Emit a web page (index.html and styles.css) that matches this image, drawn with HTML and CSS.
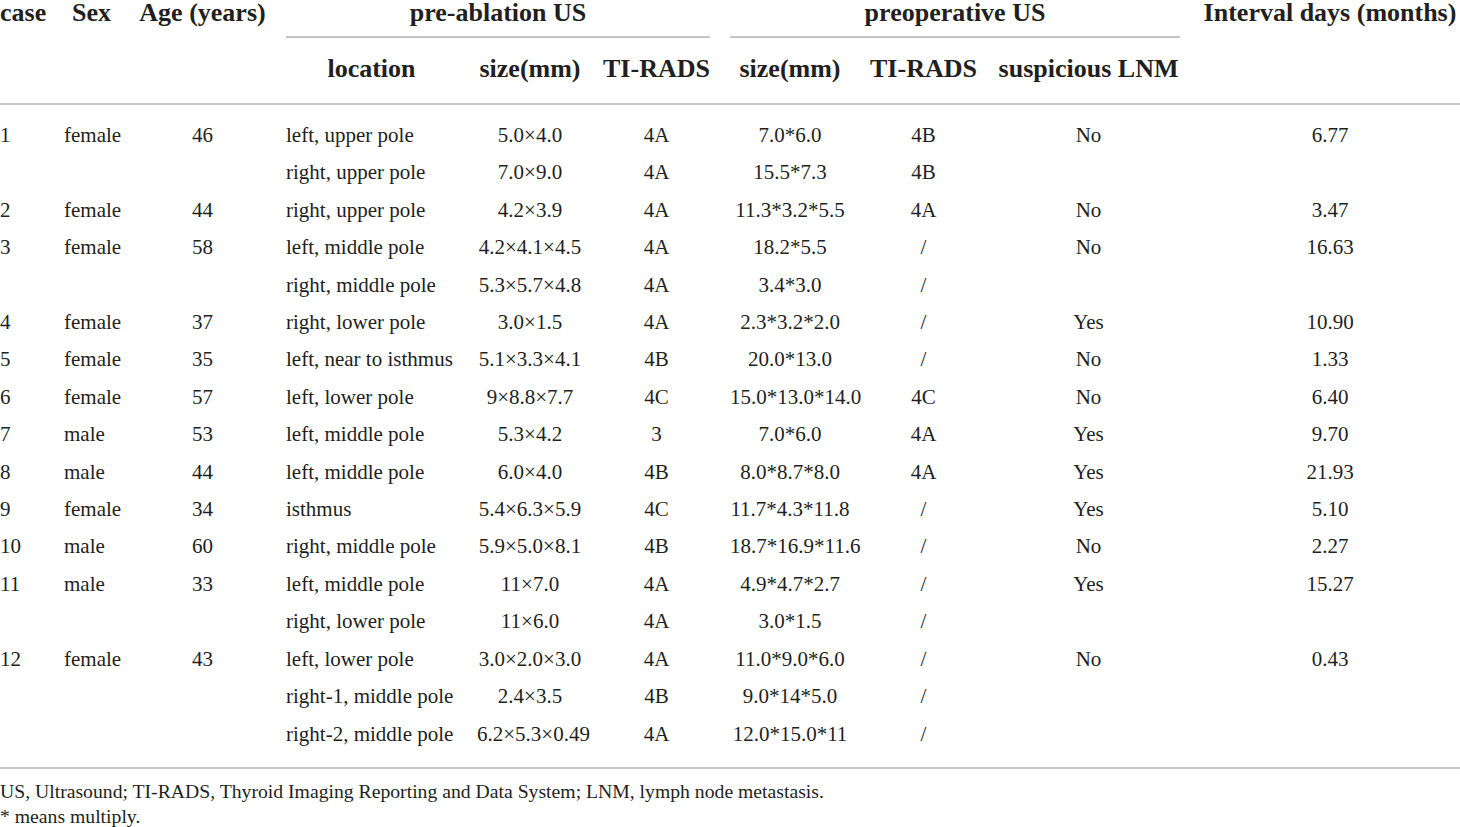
FILE: index.html
```html
<!DOCTYPE html>
<html lang="en">
<head>
    <meta charset="UTF-8">
    <title>Table - ultrasound characteristics</title>
    <link rel="stylesheet" href="styles.css">
</head>
<body>

    <table class="data-table">
        <colgroup>
            <col class="col-case">
            <col class="col-sex">
            <col class="col-age">
            <col class="col-loc">
            <col class="col-size1">
            <col class="col-rads1">
            <col class="col-size2">
            <col class="col-rads2">
            <col class="col-lnm">
            <col class="col-interval">
        </colgroup>
        <thead>
            <tr class="head-top">
                <th rowspan="2" class="first">case</th>
                <th rowspan="2">Sex</th>
                <th rowspan="2">Age (years)</th>
                <th colspan="3"><div class="group-label">pre-ablation US</div></th>
                <th colspan="3"><div class="group-label">preoperative US</div></th>
                <th rowspan="2" class="last">Interval days (months)</th>
            </tr>
            <tr class="head-sub">
                <th>location</th>
                <th>size(mm)</th>
                <th>TI-RADS</th>
                <th>size(mm)</th>
                <th>TI-RADS</th>
                <th>suspicious LNM</th>
            </tr>
        </thead>
        <tbody>
            <tr><td>1</td><td class="left">female</td><td>46</td><td class="left">left, upper pole</td><td>5.0×4.0</td><td>4A</td><td>7.0*6.0</td><td>4B</td><td>No</td><td>6.77</td></tr>
            <tr><td></td><td></td><td></td><td class="left">right, upper pole</td><td>7.0×9.0</td><td>4A</td><td>15.5*7.3</td><td>4B</td><td></td><td></td></tr>
            <tr><td>2</td><td class="left">female</td><td>44</td><td class="left">right, upper pole</td><td>4.2×3.9</td><td>4A</td><td>11.3*3.2*5.5</td><td>4A</td><td>No</td><td>3.47</td></tr>
            <tr><td>3</td><td class="left">female</td><td>58</td><td class="left">left, middle pole</td><td>4.2×4.1×4.5</td><td>4A</td><td>18.2*5.5</td><td>/</td><td>No</td><td>16.63</td></tr>
            <tr><td></td><td></td><td></td><td class="left">right, middle pole</td><td>5.3×5.7×4.8</td><td>4A</td><td>3.4*3.0</td><td>/</td><td></td><td></td></tr>
            <tr><td>4</td><td class="left">female</td><td>37</td><td class="left">right, lower pole</td><td>3.0×1.5</td><td>4A</td><td>2.3*3.2*2.0</td><td>/</td><td>Yes</td><td>10.90</td></tr>
            <tr><td>5</td><td class="left">female</td><td>35</td><td class="left">left, near to isthmus</td><td>5.1×3.3×4.1</td><td>4B</td><td>20.0*13.0</td><td>/</td><td>No</td><td>1.33</td></tr>
            <tr><td>6</td><td class="left">female</td><td>57</td><td class="left">left, lower pole</td><td>9×8.8×7.7</td><td>4C</td><td>15.0*13.0*14.0</td><td>4C</td><td>No</td><td>6.40</td></tr>
            <tr><td>7</td><td class="left">male</td><td>53</td><td class="left">left, middle pole</td><td>5.3×4.2</td><td>3</td><td>7.0*6.0</td><td>4A</td><td>Yes</td><td>9.70</td></tr>
            <tr><td>8</td><td class="left">male</td><td>44</td><td class="left">left, middle pole</td><td>6.0×4.0</td><td>4B</td><td>8.0*8.7*8.0</td><td>4A</td><td>Yes</td><td>21.93</td></tr>
            <tr><td>9</td><td class="left">female</td><td>34</td><td class="left">isthmus</td><td>5.4×6.3×5.9</td><td>4C</td><td>11.7*4.3*11.8</td><td>/</td><td>Yes</td><td>5.10</td></tr>
            <tr><td>10</td><td class="left">male</td><td>60</td><td class="left">right, middle pole</td><td>5.9×5.0×8.1</td><td>4B</td><td>18.7*16.9*11.6</td><td>/</td><td>No</td><td>2.27</td></tr>
            <tr><td>11</td><td class="left">male</td><td>33</td><td class="left">left, middle pole</td><td>11×7.0</td><td>4A</td><td>4.9*4.7*2.7</td><td>/</td><td>Yes</td><td>15.27</td></tr>
            <tr><td></td><td></td><td></td><td class="left">right, lower pole</td><td>11×6.0</td><td>4A</td><td>3.0*1.5</td><td>/</td><td></td><td></td></tr>
            <tr><td>12</td><td class="left">female</td><td>43</td><td class="left">left, lower pole</td><td>3.0×2.0×3.0</td><td>4A</td><td>11.0*9.0*6.0</td><td>/</td><td>No</td><td>0.43</td></tr>
            <tr><td></td><td></td><td></td><td class="left">right-1, middle pole</td><td>2.4×3.5</td><td>4B</td><td>9.0*14*5.0</td><td>/</td><td></td><td></td></tr>
            <tr><td></td><td></td><td></td><td class="left">right-2, middle pole</td><td>6.2×5.3×0.49</td><td>4A</td><td>12.0*15.0*11</td><td>/</td><td></td><td></td></tr>
        </tbody>
    </table>

    <div class="table-notes">
        <p>US, Ultrasound; TI-RADS, Thyroid Imaging Reporting and Data System; LNM, lymph node metastasis.</p>
        <p>* means multiply.</p>
    </div>

</body>
</html>
```

FILE: styles.css
```css
/* ページ全体 */
body {
    margin: 0;
    background-color: #ffffff;
    color: #231f20;
    font-family: "Liberation Serif", "Times New Roman", serif;
}

/* 表本体 */
.data-table {
    width: 1460px;
    table-layout: fixed;
    border-collapse: separate;
    border-spacing: 0;
    border-bottom: 2px solid #c4c4c4;
}

.col-case { width: 54px; }
.col-sex { width: 75px; }
.col-age { width: 147px; }
.col-loc { width: 191px; }
.col-size1 { width: 126px; }
.col-rads1 { width: 127px; }
.col-size2 { width: 140px; }
.col-rads2 { width: 127px; }
.col-lnm { width: 203px; }
.col-interval { width: 270px; }

.data-table th,
.data-table td {
    padding: 0 10px;
    text-align: center;
    white-space: nowrap;
}

/* 左端・右端の列は外側の余白なし */
.data-table th.first,
.data-table tbody td:first-child {
    padding-left: 0;
    text-align: left;
}

.data-table th.last,
.data-table tbody td:last-child {
    padding-right: 0;
}

/* 見出し */
.data-table th {
    font-size: 26px;
    font-weight: bold;
    line-height: 25px;
    vertical-align: top;
}

.head-top th {
    padding-top: 0;
}

.head-top th[rowspan] {
    border-bottom: 2px solid #c4c4c4;
}

.group-label {
    padding-bottom: 11px;
    border-bottom: 2px solid #c4c4c4;
}

.head-sub th {
    padding-top: 18px;
    padding-bottom: 22px;
    border-bottom: 2px solid #c4c4c4;
}

/* データ行 */
.data-table td {
    font-size: 21px;
    line-height: 37.4px;
    vertical-align: top;
}

.data-table td.left {
    text-align: left;
}

.data-table tbody tr:first-child td {
    padding-top: 12px;
}

.data-table tbody tr:last-child td {
    padding-bottom: 14px;
}

/* 注記 */
.table-notes {
    margin-top: 10px;
    font-size: 19.7px;
    line-height: 25px;
}

.table-notes p {
    margin: 0;
}
```
